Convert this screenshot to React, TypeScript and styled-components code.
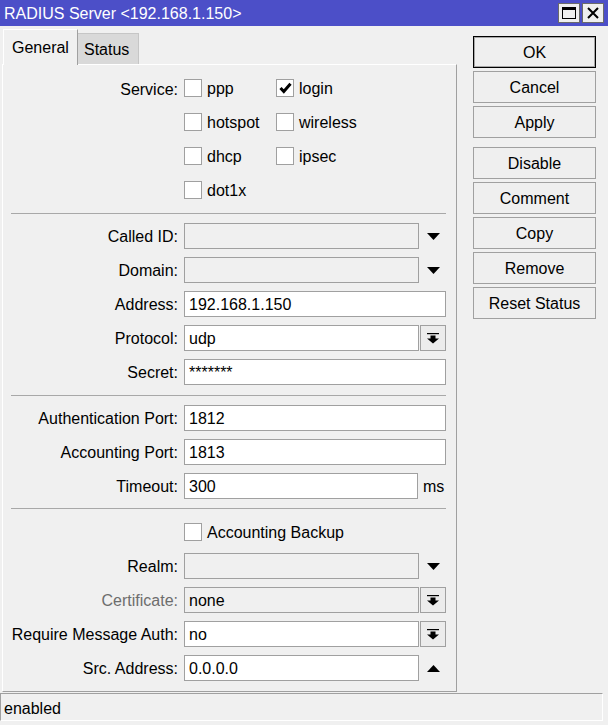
import React from "react";
import styled, { createGlobalStyle } from "styled-components";

const GlobalStyle = createGlobalStyle`
    html, body {
        margin: 0;
        padding: 0;
        background: #f0f0f0;
    }
    body {
        font-family: "Liberation Sans", Arial, sans-serif;
        font-size: 16px;
        color: #000;
    }
`;

const Window = styled.div`
    width: 608px;
    height: 725px;
    background: #f0f0f0;
    display: flex;
    flex-direction: column;
    overflow: hidden;
`;

const TitleBar = styled.div`
    height: 26px;
    flex: none;
    background: #4c4fc8;
    color: #fff;
    display: flex;
    align-items: center;
    padding: 0 4px;
`;

const Title = styled.div`
    flex: 1;
    white-space: nowrap;
    padding-top: 1px;
`;

const TitleButtons = styled.div`
    display: flex;
    gap: 2px;
    align-self: flex-start;
    margin-top: 3px;
`;

const TitleButton = styled.div`
    width: 22px;
    height: 20px;
    box-sizing: border-box;
    background: #efefef;
    border: 1px solid #6a6a6a;
    display: flex;
    align-items: center;
    justify-content: center;
`;

const Main = styled.div`
    flex: 1;
    display: flex;
    min-height: 0;
`;

const LeftCol = styled.div`
    width: 455px;
    margin-left: 2px;
    padding: 3px 0 1px;
    display: flex;
    flex-direction: column;
`;

const TabStrip = styled.div`
    height: 35px;
    display: flex;
    align-items: flex-end;
    padding-left: 1px;
`;

const Tab = styled.div<{ $active?: boolean }>`
    box-sizing: border-box;
    display: flex;
    align-items: center;
    height: ${p => (p.$active ? "36px" : "31px")};
    margin-bottom: ${p => (p.$active ? "-1px" : "0")};
    position: relative;
    z-index: ${p => (p.$active ? 1 : 0)};
    padding: ${p => (p.$active ? "1px 0 0 8px" : "2px 0 0 6px")};
    width: ${p => (p.$active ? "75px" : "61px")};
    background: ${p => (p.$active ? "#f0f0f0" : "#d9d9d9")};
    border-top: 1px solid ${p => (p.$active ? "#fff" : "#c6c6c6")};
    border-left: ${p => (p.$active ? "1px solid #fff" : "0")};
    border-right: 1px solid ${p => (p.$active ? "#a0a0a0" : "#c6c6c6")};
`;

const Panel = styled.div`
    flex: 1;
    box-sizing: border-box;
    border-top: 1px solid #fff;
    border-left: 1px solid #fff;
    border-right: 1px solid #a0a0a0;
    border-bottom: 1px solid #a0a0a0;
    padding-top: 6px;
    display: flex;
    flex-direction: column;
`;

const Separator = styled.div<{ $top?: number; $bottom?: number }>`
    height: 0;
    border-top: 1px solid #a8a8a8;
    margin: ${p => p.$top ?? 6}px 10px ${p => p.$bottom ?? 5}px 8px;
`;

const Row = styled.div`
    display: flex;
    align-items: center;
    height: 34px;
    gap: 6px;
`;

const TopRow = styled.div`
    display: flex;
    align-items: flex-start;
    gap: 6px;
`;

const Label = styled.div<{ $disabled?: boolean }>`
    width: 175px;
    flex: none;
    box-sizing: border-box;
    text-align: right;
    white-space: nowrap;
    line-height: 34px;
    padding-top: 2px;
    color: ${p => (p.$disabled ? "#6d6d6d" : "#000")};
`;

const Field = styled.div`
    width: 262px;
    display: flex;
    align-items: center;
    gap: 1px;
`;

const Box = styled.div<{ $grey?: boolean; $width?: number }>`
    box-sizing: border-box;
    height: 26px;
    ${p => (p.$width ? `width: ${p.$width}px;` : "flex: 1;")}
    border: 1px solid #a0a0a0;
    background: ${p => (p.$grey ? "#f0f0f0" : "#fff")};
    display: flex;
    align-items: center;
    padding: 2px 4px 0;
    white-space: nowrap;
`;

const Trail = styled.div<{ $button?: boolean }>`
    box-sizing: border-box;
    width: 26px;
    height: 26px;
    flex: none;
    display: flex;
    align-items: center;
    justify-content: center;
    border: 1px solid ${p => (p.$button ? "#a0a0a0" : "transparent")};
    background: ${p => (p.$button ? "#ececec" : "transparent")};
`;

const Unit = styled.div`
    margin-left: 4px;
    padding-top: 2px;
`;

const CheckGrid = styled.div`
    display: grid;
    grid-template-columns: 92px 92px;
    grid-auto-rows: 34px;
`;

const CheckItem = styled.label`
    display: flex;
    align-items: center;
    gap: 5px;
    white-space: nowrap;
`;

const CheckText = styled.span`
    padding-top: 2px;
`;

const CheckBox = styled.div`
    box-sizing: border-box;
    width: 18px;
    height: 18px;
    border: 1px solid #a0a0a0;
    background: #fff;
    display: flex;
    align-items: center;
    justify-content: center;
`;

const RightCol = styled.div`
    width: 123px;
    margin-left: 16px;
    padding-top: 10px;
    display: flex;
    flex-direction: column;
    gap: 3px;
`;

const Button = styled.div<{ $default?: boolean; $spaced?: boolean }>`
    box-sizing: border-box;
    height: 32px;
    display: flex;
    align-items: center;
    justify-content: center;
    padding-top: 2px;
    background: #efefef;
    border: 1px solid ${p => (p.$default ? "#000" : "#a0a0a0")};
    box-shadow: ${p => (p.$default ? "inset 0 0 0 1px rgba(0,0,0,0.3)" : "none")};
    margin-top: ${p => (p.$spaced ? "6px" : "0")};
`;

const StatusBar = styled.div`
    flex: none;
    box-sizing: border-box;
    height: 28px;
    margin: 0 5px 4px 0;
    border-top: 1px solid #a0a0a0;
    border-left: 1px solid #a0a0a0;
    border-right: 1px solid #fff;
    border-bottom: 1px solid #fff;
    padding: 3px 0 0 3px;
    display: flex;
    align-items: center;
`;

const DownArrow = () => (
    <svg width="13" height="7" viewBox="0 0 13 7"><polygon points="0,0 13,0 6.5,7" fill="#000" /></svg>
);

const UpArrow = () => (
    <svg width="13" height="7" viewBox="0 0 13 7"><polygon points="0,7 13,7 6.5,0" fill="#000" /></svg>
);

const DropIcon = () => (
    <svg width="12" height="11" viewBox="0 0 12 11">
        <rect x="0" y="0" width="12" height="1.2" fill="#000" />
        <rect x="3.5" y="2.5" width="5" height="3.5" fill="#000" />
        <polygon points="0,5.5 12,5.5 6,10.5" fill="#000" />
    </svg>
);

const Check = () => (
    <svg width="13" height="12" viewBox="0 0 13 12">
        <path d="M1.5 6 L4.8 9.5 L11.5 1.8" stroke="#000" strokeWidth="3" fill="none" />
    </svg>
);

const Checkable = ({ label, checked }: { label: string; checked?: boolean }) => (
    <CheckItem>
        <CheckBox>{checked && <Check />}</CheckBox>
        <CheckText>{label}</CheckText>
    </CheckItem>
);

const App = () => {
    return (
        <Window>
            <GlobalStyle />
            <TitleBar>
                <Title>RADIUS Server &lt;192.168.1.150&gt;</Title>
                <TitleButtons>
                    <TitleButton>
                        <svg width="14" height="12" viewBox="0 0 14 12">
                            <rect x="0.5" y="0.5" width="13" height="11" fill="none" stroke="#000" />
                            <rect x="0" y="0" width="14" height="3" fill="#000" />
                        </svg>
                    </TitleButton>
                    <TitleButton>
                        <svg width="12" height="12" viewBox="0 0 12 12">
                            <path d="M1 1 L11 11 M11 1 L1 11" stroke="#000" strokeWidth="2" />
                        </svg>
                    </TitleButton>
                </TitleButtons>
            </TitleBar>
            <Main>
                <LeftCol>
                    <TabStrip>
                        <Tab $active>General</Tab>
                        <Tab>Status</Tab>
                    </TabStrip>
                    <Panel>
                        <TopRow>
                            <Label>Service:</Label>
                            <CheckGrid>
                                <Checkable label="ppp" />
                                <Checkable label="login" checked />
                                <Checkable label="hotspot" />
                                <Checkable label="wireless" />
                                <Checkable label="dhcp" />
                                <Checkable label="ipsec" />
                                <Checkable label="dot1x" />
                            </CheckGrid>
                        </TopRow>
                        <Separator />
                        <Row>
                            <Label>Called ID:</Label>
                            <Field><Box $grey /><Trail><DownArrow /></Trail></Field>
                        </Row>
                        <Row>
                            <Label>Domain:</Label>
                            <Field><Box $grey /><Trail><DownArrow /></Trail></Field>
                        </Row>
                        <Row>
                            <Label>Address:</Label>
                            <Field><Box>192.168.1.150</Box></Field>
                        </Row>
                        <Row>
                            <Label>Protocol:</Label>
                            <Field><Box>udp</Box><Trail $button><DropIcon /></Trail></Field>
                        </Row>
                        <Row>
                            <Label>Secret:</Label>
                            <Field><Box>*******</Box></Field>
                        </Row>
                        <Separator />
                        <Row>
                            <Label>Authentication Port:</Label>
                            <Field><Box>1812</Box></Field>
                        </Row>
                        <Row>
                            <Label>Accounting Port:</Label>
                            <Field><Box>1813</Box></Field>
                        </Row>
                        <Row>
                            <Label>Timeout:</Label>
                            <Field><Box $width={234}>300</Box><Unit>ms</Unit></Field>
                        </Row>
                        <Separator $top={5} $bottom={6} />
                        <Row>
                            <Label />
                            <Checkable label="Accounting Backup" />
                        </Row>
                        <Row>
                            <Label>Realm:</Label>
                            <Field><Box $grey /><Trail><DownArrow /></Trail></Field>
                        </Row>
                        <Row>
                            <Label $disabled>Certificate:</Label>
                            <Field><Box $grey>none</Box><Trail $button><DropIcon /></Trail></Field>
                        </Row>
                        <Row>
                            <Label>Require Message Auth:</Label>
                            <Field><Box>no</Box><Trail $button><DropIcon /></Trail></Field>
                        </Row>
                        <Row>
                            <Label>Src. Address:</Label>
                            <Field><Box>0.0.0.0</Box><Trail><UpArrow /></Trail></Field>
                        </Row>
                    </Panel>
                </LeftCol>
                <RightCol>
                    <Button $default>OK</Button>
                    <Button>Cancel</Button>
                    <Button>Apply</Button>
                    <Button $spaced>Disable</Button>
                    <Button>Comment</Button>
                    <Button>Copy</Button>
                    <Button>Remove</Button>
                    <Button>Reset Status</Button>
                </RightCol>
            </Main>
            <StatusBar>enabled</StatusBar>
        </Window>
    );
};

export default App;
